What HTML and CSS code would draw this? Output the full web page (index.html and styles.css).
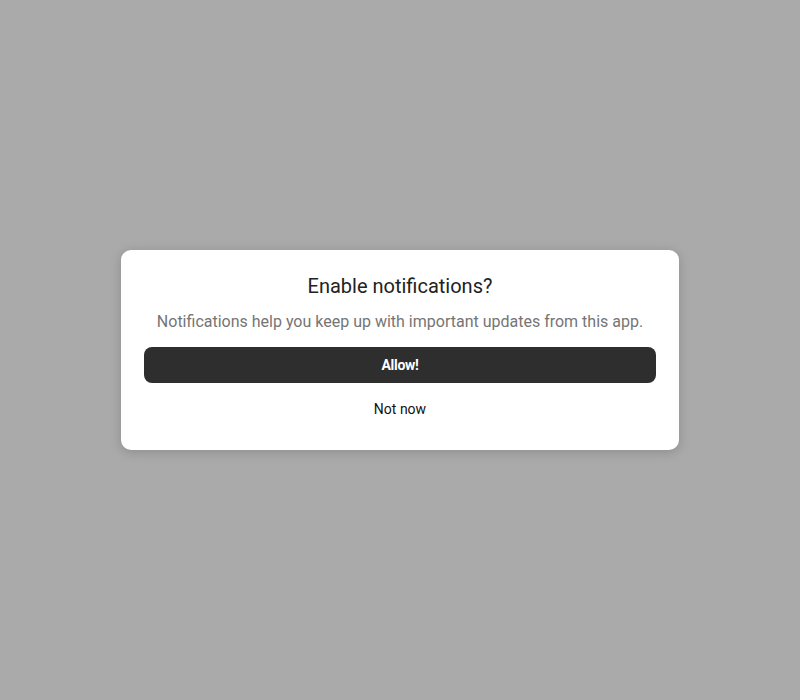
FILE: index.html
```html
<!DOCTYPE html>
<html lang="en">
<head>
<meta charset="utf-8">
<title>Enable notifications</title>
<link rel="stylesheet" href="styles.css">
</head>
<body>
<div class="backdrop">
  <div class="dialog" role="dialog" aria-labelledby="dlg-title">
    <h2 class="dialog-title" id="dlg-title">Enable notifications?</h2>
    <p class="dialog-text">Notifications help you keep up with important updates from this app.</p>
    <button class="btn btn-primary" type="button">Allow!</button>
    <button class="btn btn-plain" type="button">Not now</button>
  </div>
</div>
</body>
</html>
```
FILE: styles.css
```css
html, body {
  margin: 0;
  padding: 0;
}
body {
  background: #aaaaaa;
  font-family: Roboto, "Liberation Sans", Arial, sans-serif;
}
.backdrop {
  height: 700px;
  display: flex;
  align-items: center;
  justify-content: center;
}
.dialog {
  box-sizing: border-box;
  width: 558px;
  background: #ffffff;
  border-radius: 10px;
  box-shadow: 0 2px 12px rgba(0, 0, 0, 0.18);
  padding: 25px 23px 23px;
  display: flex;
  flex-direction: column;
  text-align: center;
}
.dialog-title {
  margin: 0 0 15px;
  font-size: 20px;
  line-height: 22px;
  font-weight: 400;
  color: #222222;
}
.dialog-text {
  margin: 0 0 15px;
  font-size: 16px;
  line-height: 20px;
  color: #757575;
}
.btn {
  height: 36px;
  border: 0;
  border-radius: 8px;
  font-family: inherit;
  font-size: 14px;
  cursor: pointer;
  padding: 0;
}
.btn-primary {
  background: #2e2e2e;
  color: #ffffff;
  font-weight: 700;
  letter-spacing: -0.3px;
}
.btn-plain {
  margin-top: 8px;
  background: transparent;
  color: #111111;
}
```
